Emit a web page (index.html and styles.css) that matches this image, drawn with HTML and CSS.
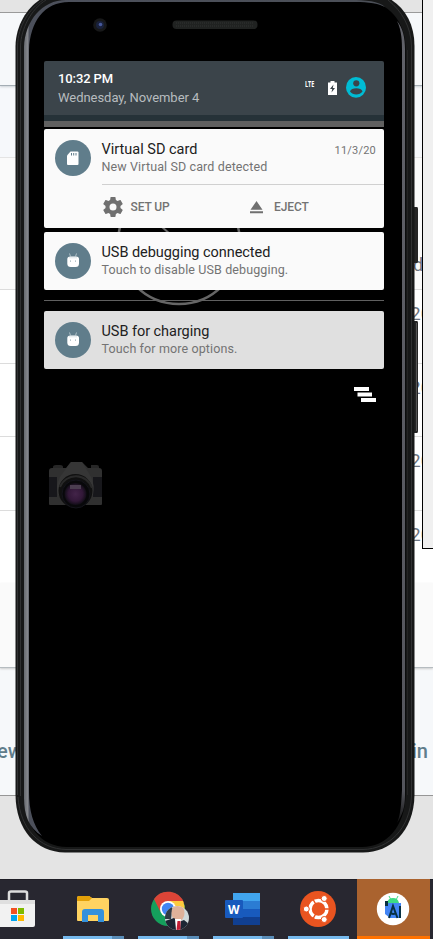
FILE: index.html
```
<!DOCTYPE html>
<html lang="en">
<head>
<meta charset="utf-8">
<title>Android emulator</title>
<link rel="stylesheet" href="styles.css">
</head>
<body>
<div class="desktop">
  <main class="page">
    <div class="band band-top"></div>
    <div class="band band-nav"></div>
    <div class="band band-sub"></div>
    <div class="band band-head"><span>d</span></div>
    <div class="band row"><span>20</span></div>
    <div class="band row"><span>20</span></div>
    <div class="band row"><span>20</span></div>
    <div class="band row last"><span>20</span></div>
    <div class="band band-foot"></div>
    <div class="band band-links"><b>ew</b><b>in</b></div>
  </main>

  <section class="phone">
    <svg class="frame" width="433" height="860" viewBox="0 0 433 860">
      <defs>
        <linearGradient id="edge"><stop offset="0" stop-color="#666a70"/><stop offset=".01" stop-color="#85878c"/><stop offset=".015" stop-color="#4c505b"/><stop offset="1" stop-color="#4b4f57"/></linearGradient>
        <linearGradient id="fade" x1="0" y1="0" x2="0" y2="1"><stop offset="0" stop-color="#606168"/><stop offset=".96" stop-color="#54555c"/><stop offset="1" stop-color="#111"/></linearGradient>
      </defs>
      <path d="M413 207h4q1 0 1 2v52q0 2-1 2h-4zM413 321h4q1 0 1 2v108q0 2-1 2h-4z" fill="#252525"/>
      <path d="M416.500 323v108" stroke="#555"/>
      <path d="M15.500 795V46C16 24 28 7 41-1H390C405 8 414.500 24 414.500 46V795C414 832 390 852.500 363 852.500H65C36 852 16 830 15.500 795Z" fill="#171818"/>
      <path d="M17.500 795V46C18 26 29 9 43 0M20.500 796V46C21 29 31 9 46 0M18 797C20 829 40 849 66 849.500H363C389 849 410 829 411.500 796V46C411 27 402 11 388 0" fill="none" stroke="#303132"/>
      <path d="M24 795V47C25 22 42 1 69 1H363C389 1 405 22 405.500 47V795C405 827 386 847 362 847H67C41 847 24 826 24 795Z" fill="#000"/>
      <path d="M24 798V47C25 21 42 0 66 0H350C366 0 379 1 385 7C374 2 365 2 350 2H69C44 2 30 22 29 50V792C29 810 33 825 42 836C29 828 24 815 24 798Z" fill="url(#edge)"/>
      <path d="M397 21C402 31 402 43 402 50V790C401 809 400 816 397 823C403 814 405 807 405 795V49C405 38 403 28 397 21Z" fill="url(#fade)"/>
      <path d="M407.500 50V795" stroke="#242424"/>
      <circle cx="100" cy="25" r="6.800" fill="#171819"/><circle cx="100" cy="25" r="4" fill="#19213b"/><circle cx="100.500" cy="24.500" r="1.800" fill="#46589a"/>
      <rect x="172.500" y="20.500" width="85" height="8.500" rx="4" fill="#202221"/>
      <path d="M176 23h78M176 26h78" stroke="#303332" stroke-dasharray="1 1"/>
    </svg>

    <div class="screen">
      <svg class="clock" width="340" height="100" viewBox="44 222 340 100"><circle cx="179" cy="243" r="61" fill="none" stroke="#666" stroke-width="2.500"/><path d="M162 227l8 7" stroke="#666" stroke-width="2"/></svg>
      <header class="status">
        <div class="when"><strong>10:32 PM</strong><span>Wednesday, November 4</span></div>
        <span class="lte">LTE</span>
        <svg class="battery" width="9" height="14" viewBox="0 0 9 14"><path d="M2.500 1.500V0h4v1.500H9V14H0V1.500Z" fill="#fff"/><path d="M5.500 3.500L2 8h2.200L3.500 11.500L7 7H4.800Z" fill="#3b444a"/></svg>
        <svg class="user" width="20" height="21" viewBox="0 0 20 21"><ellipse cx="10" cy="10.400" rx="10" ry="10.300" fill="#00bcd4"/><circle cx="10.300" cy="6.300" r="3.100" fill="#3b444a"/><path d="M4 14.500c1-4.200 11.500-4.200 12.500 0c-2.800 3.900-9.700 3.900-12.500 0Z" fill="#3b444a"/></svg>
      </header>
      <div class="peek"></div>

      <article class="card sd">
        <svg class="badge" width="36" height="36" viewBox="0 0 36 36"><circle cx="18" cy="18" r="18" fill="#607d8b"/><path d="M15.500 11.500h7q1 0 1 1v11.500q0 1-1 1h-9.500q-1 0-1-1V15.500Z" fill="#fff"/><path d="M16.500 13v2.500M18.700 13v2.500M21 13v2.500" stroke="#607d8b" stroke-width="1"/></svg>
        <div class="text"><h2 class="t1">Virtual SD card</h2><p class="s1">New Virtual SD card detected</p></div>
        <time>11/3/20</time>
        <div class="actions">
          <svg width="20" height="20" viewBox="2 2 20 20"><path fill="#707070" d="M19.430 12.980c.040-.320.070-.640.070-.980s-.030-.660-.070-.980l2.110-1.650c.190-.150.240-.420.120-.640l-2-3.460c-.120-.220-.390-.300-.610-.220l-2.490 1c-.520-.400-1.080-.730-1.690-.980l-.380-2.650C14.460 2.180 14.250 2 14 2h-4c-.250 0-.460.180-.490.420l-.380 2.650c-.610.250-1.170.590-1.690.980l-2.490-1c-.230-.090-.490 0-.610.220l-2 3.460c-.130.220-.070.490.120.640l2.110 1.650c-.040.320-.070.650-.070.980s.030.660.070.980l-2.110 1.650c-.190.150-.240.420-.120.640l2 3.460c.120.220.390.300.610.220l2.490-1c.520.400 1.080.730 1.690.980l.380 2.650c.030.240.240.420.490.420h4c.250 0 .460-.180.490-.420l.380-2.650c.610-.250 1.170-.590 1.690-.980l2.490 1c.230.090.490 0 .610-.220l2-3.460c.120-.220.070-.490-.120-.640ZM12 15.500a3.500 3.500 0 1 1 0-7a3.500 3.500 0 0 1 0 7Z"/></svg>
          <span class="setup">SET UP</span>
          <svg class="eject" width="13" height="13" viewBox="0 0 13 13"><path fill="#707070" d="M6.500 0L12.500 8.800H.500ZM0 10.200h13v2H0Z"/></svg>
          <span class="ejectlabel">EJECT</span>
        </div>
      </article>

      <article class="card usb">
        <svg class="badge" width="36" height="36" viewBox="0 0 36 36"><circle cx="18" cy="18" r="18" fill="#607d8b"/><path d="M12.300 16q0-2.500 3-2.500h5.700q3 0 3 2.500v4.500q0 3.500-3.500 3.500h-4.700q-3.500 0-3.500-3.500Z" fill="#fff"/><path d="M14.500 10.500l1 3M21.500 10.500l-1 3" stroke="#c3d0d6" stroke-width=".8"/><path d="M14 14.800h8" stroke="#d5dee2" stroke-width=".8"/><circle cx="15.500" cy="18" r=".5" fill="#607d8b"/><circle cx="20.500" cy="18" r=".5" fill="#607d8b"/></svg>
        <div class="text"><h2 class="t2">USB debugging connected</h2><p class="s2">Touch to disable USB debugging.</p></div>
      </article>
      <div class="shelf"></div>
      <article class="card usb muted">
        <svg class="badge" width="36" height="36" viewBox="0 0 36 36"><circle cx="18" cy="18" r="18" fill="#607d8b"/><path d="M12.300 16q0-2.500 3-2.500h5.700q3 0 3 2.500v4.500q0 3.500-3.500 3.500h-4.700q-3.500 0-3.500-3.500Z" fill="#fff"/><path d="M14.500 10.500l1 3M21.500 10.500l-1 3" stroke="#c3d0d6" stroke-width=".8"/><path d="M14 14.800h8" stroke="#d5dee2" stroke-width=".8"/><circle cx="15.500" cy="18" r=".5" fill="#607d8b"/><circle cx="20.500" cy="18" r=".5" fill="#607d8b"/></svg>
        <div class="text"><h2 class="t3">USB for charging</h2><p class="s3">Touch for more options.</p></div>
      </article>
      <svg class="clear" width="22" height="15" viewBox="0 0 22 15"><path d="M0 0h15v4H0ZM3.500 5.500h14.500v4H3.500ZM7 11h15v4H7Z" fill="#fff"/></svg>
      <svg class="camera" width="56" height="50" viewBox="0 0 56 50">
        <defs><radialGradient id="lens"><stop offset="0" stop-color="#432449"/><stop offset=".65" stop-color="#321838"/><stop offset="1" stop-color="#110d16"/></radialGradient></defs>
        <path d="M5 6q0-2 3-2h4q3 0 3 2v3H5zM43 4h6q2 0 2 2v3h-8z" fill="#272727"/><path d="M1 10q0-3 3-3h14L22 2q1-1 2-1h9q1 0 2 1l5 5h11q3 0 3 3v33q0 1-1 1H2q-1 0-1-1Z" fill="#303030"/>
        <path d="M1 16h8v20H1ZM45 16h9v20h-9Z" fill="#17171b"/><path d="M23 1h11l9 15q4 8 2 18H10q-3-9 2-18Z" fill="#363636"/>
        <circle cx="27.500" cy="30" r="17" fill="#101010"/><path d="M12 26a17 17 0 0 1 32 1" fill="none" stroke="#292929" stroke-width="2"/><circle cx="28" cy="33" r="14" fill="#08080a" stroke="#14141b"/><circle cx="27.500" cy="33" r="11" fill="url(#lens)"/><path d="M22 24h11v4H22Z" fill="#4b3d50"/>
      </svg>
    </div>
  </section>

  <aside class="window"></aside>

  <footer class="taskbar">
    <div class="app store"><svg width="75" height="60" viewBox="-15 0 75 60"><path d="M9 23V14q0-1.500 2-1.500h14q2 0 2 1.500v9" fill="none" stroke="#ddd" stroke-width="2.500"/><path d="M-2 21h37v25q0 2-2 2H0Z" fill="#f2f2f2"/><path d="M0 21h35v4H0Z" fill="#ccc" opacity=".5"/><path d="M11 29h6v6h-6Z" fill="#f25022"/><path d="M18 29h6v6h-6Z" fill="#7fba00"/><path d="M11 36h6v6h-6Z" fill="#00a4ef"/><path d="M18 36h6v6h-6Z" fill="#ffb900"/></svg></div>
    <div class="app multi"><svg width="61" height="60" viewBox="63 0 61 60"><path d="M77 19q0-2 2-2h10l3 2h15q2 0 2 2v20q0 1-1 1H78q-1 0-1-1Z" fill="#ffd361"/><path d="M77 19q0-2 2-2h10l3 2-3 3H77Z" fill="#e3a008"/><path d="M82 43V33q0-3 3-3h16q3 0 3 3v10h-6v-7H88v7h-6Z" fill="#3491dc"/></svg></div>
    <div class="app multi"><svg width="61" height="60" viewBox="138 0 61 60"><defs><clipPath id="face"><circle cx="177" cy="39" r="12"/></clipPath></defs><circle cx="168" cy="30" r="17" fill="#15a05c"/><path d="M154 20A17 17 0 0 1 184 24H168L160 32Z" fill="#dc4437"/><path d="M168 22h15q4 9-2 18l-13 7 9-16Z" fill="#fdca3e"/><circle cx="168" cy="30" r="8" fill="#fff"/><circle cx="168" cy="30" r="6.200" fill="#4285f4"/><g clip-path="url(#face)"><path d="M165 25h24v27h-24Z" fill="#d0d9da"/><path d="M165 25h8l-2 15h-6Z" fill="#303b45"/><ellipse cx="178" cy="34" rx="6.500" ry="8.500" fill="#dfb29a"/><path d="M172 29q5-4 12 0v-3h-12Z" fill="#e7e2d9"/><path d="M165 42l9-3 5 4 5-2 5 4v7h-24Z" fill="#1c2634"/><path d="M175 40h6l-1 11h-4Z" fill="#fff"/><path d="M177.500 42h3v9h-4Z" fill="#c31f36"/></g></svg></div>
    <div class="app multi"><svg width="61" height="60" viewBox="213 0 61 60"><path d="M233 14h27v8h-27Z" fill="#41a5ee"/><path d="M233 22h27v8h-27Z" fill="#2b7cd3"/><path d="M233 30h27v8h-27Z" fill="#185abd"/><path d="M233 38h27v8h-27Z" fill="#103f91"/><rect x="225" y="21" width="18" height="18" rx="1" fill="#185abd"/><text x="233.800" y="35" class="word" text-anchor="middle">W</text></svg></div>
    <div class="app single"><svg width="61" height="60" viewBox="288 0 61 60"><circle cx="318" cy="30" r="18" fill="#e95420"/><circle cx="318.500" cy="30" r="8.500" fill="none" stroke="#fff" stroke-width="3.500"/><g stroke="#e95420" stroke-width="1.500"><path d="M318.500 30L310 15M318.500 30h16M318.500 30l-8.500 15"/></g><g fill="#fff" stroke="#e95420"><circle cx="306.300" cy="30" r="3"/><circle cx="324.200" cy="19.500" r="3"/><circle cx="324.200" cy="40.500" r="3"/></g></svg></div>
    <div class="app active"><svg width="73" height="60" viewBox="357 0 73 60"><circle cx="393" cy="30" r="16.200" fill="#fff"/><path d="M385 24h16v15h-11l-5-4Z" fill="#4285f4"/><path d="M387 24q1-5 6-5t6 5Z" fill="#3ddc84"/><path d="M389 17l2 4M398 17l-2 4" stroke="#3ddc84"/><path d="M386.500 22v5" stroke="#073042" stroke-width="3"/><path d="M389 39l4-12 4.500 12M391 34q2 2 5 0M400 27v12" fill="none" stroke="#073042" stroke-width="2"/></svg></div>
  </footer>
</div>
</body>
</html>
```

FILE: styles.css
```
* { box-sizing: border-box; }
body { margin: 0; font-family: Roboto, sans-serif; }
h2, p { margin: 0; font-weight: 400; }
svg { display: block; flex: none; }
.desktop { position: relative; width: 433px; height: 939px; overflow: hidden; background: #e4e4e4; display: flex; flex-direction: column; }
.page { height: 879px; flex: none; }
.band { display: flex; justify-content: flex-end; border-bottom: 1px solid #dcdcdc; background: #fff; font-size: 19px; line-height: 22px; color: #6c7480; }
.band span { width: 23px; white-space: nowrap; }
.band-top { height: 13px; background: #e4e4e4; border-color: #969696; }
.band-nav { height: 73px; background: #f6f8fa; border-color: #a4adb4; box-shadow: 0 1px 2px #ccd2d6; position: relative; }
.band-sub { height: 72px; background: #f6f8fb; border-color: #e4e4e4; }
.band-head { height: 132px; background: #fafafa; padding-top: 96px; font-size: 18px; }
.band-head span { width: 20px; }
.row { height: 74px; padding-top: 13px; }
.row + .row { height: 73px; }
.row:nth-of-type(7) { height: 74px; }
.row.last { height: 72px; border: 0; }
.band-foot { height: 85px; background: #fafafa; border-color: #b6bcc0; box-shadow: 0 1px 2px #ccc; position: relative; }
.band-links { height: 128px; justify-content: space-between; padding: 72px 5px 0 0; background: #f6f8fa; border-color: #969696; color: #607d8b; font-size: 20px; }
.band-links b { font-weight: 500; margin-left: -3px; }

.phone { position: absolute; left: 0; top: 0; width: 433px; height: 860px; padding: 61px 49px 0 44px; }
.frame { position: absolute; left: 0; top: 0; }
.screen { position: relative; width: 340px; }
.clock { position: absolute; left: 0; top: 161px; }
.status { position: relative; display: flex; height: 60px; padding: 0 18px 0 14px; background: #3b444a; border-bottom: 6px solid #263238; border-radius: 2px 2px 0 0; }
.when { flex: 1; display: flex; flex-direction: column; padding-top: 9px; }
.when strong { color: #fff; font-size: 13px; line-height: 18px; font-weight: 500; letter-spacing: -.1px; }
.when span { color: #b7bcbf; font-size: 13px; line-height: 19px; letter-spacing: -.04px; }
.lte { color: #fff; font: 700 8px/9px "Open Sans", sans-serif; margin: 18px 5px 0 0; width: 18px; transform: scaleX(.68); transform-origin: left; }
.battery { margin: 20px 9px 0 0; }
.user { margin-top: 16px; }
.peek { height: 6px; margin-bottom: 2px; background: #606060; }
.card { position: relative; display: grid; grid-template-columns: 57.5px 1fr auto; background: #fafafa; border-radius: 2px; color: #212121; }
.badge { margin: 11px 0 0 11px; }
.text { padding-top: 11px; white-space: nowrap; }
.card h2 { font-size: 14.500px; line-height: 20px; }
.card p { margin-top: -2px; font-size: 12.500px; line-height: 17px; letter-spacing: .12px; color: #737373; }
.sd { height: 99px; grid-template-rows: 55px 44px; }
.card time { font-size: 11px; line-height: 14px; color: #737373; padding: 15px 8px 0 0; letter-spacing: .2px; }
.actions { grid-column: 2 / 4; display: flex; align-items: center; border-top: 1px solid #d0d0d0; padding: 1px 0 0 1px; font-size: 12px; font-weight: 500; color: #737373; }
.setup { width: 127.500px; padding-left: 8px; letter-spacing: -.1px; }
.ejectlabel { margin-left: 11px; letter-spacing: -.1px; }
.usb { height: 58px; margin-top: 4px; }
.shelf { height: 1px; margin: 10px 0; background: #606060; position: relative; }
.muted { margin-top: 0; background: #e0e0e0; }
.clear { margin: 18px 0 0 310px; }
.camera { margin: 59px 0 0 4px; }
.card .t2, .card .t3 { letter-spacing: -.05px; }

.window { position: absolute; left: 422px; top: 0; width: 20px; height: 549px; background: #f0f0f0; border: solid #000; border-width: 0 0 1px 1px; }
.taskbar { display: flex; height: 60px; flex: none; background: #282730; border-top: 1px solid #1f1e26; }
.app { height: 60px; margin: -1px 15px 0 0; border-bottom: 3px solid #76b9ed; overflow: hidden; flex: none; }
.app svg { margin-bottom: -3px; }
.app.store { width: 63px; margin-right: 0; border-color: transparent; }
.store svg { margin-left: -15px; }
.multi { width: 61px; margin-right: 14px; border-image: linear-gradient(90deg, #76b9ed 47px, #5a8db8 47px) 3; }
.single { width: 61px; margin-right: 8px; }
.active { width: 73px; margin-right: 0; background: #aa632f; border-color: #ff7200; }
.word { font: 700 12px "Open Sans", sans-serif; fill: #fff; }
```
